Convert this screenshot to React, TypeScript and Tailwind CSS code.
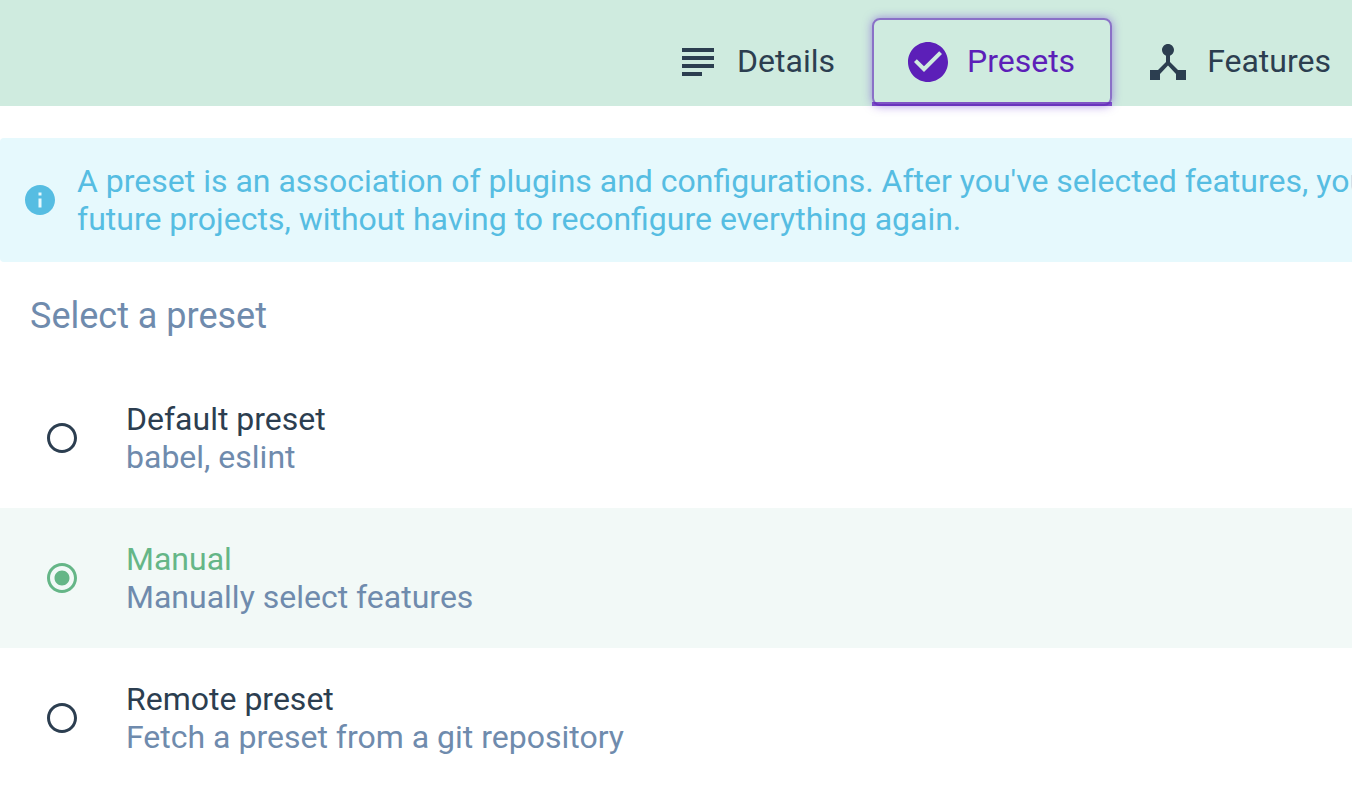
import { useState, type ReactNode } from "react";
import { MdSubject, MdCheckCircle, MdDeviceHub, MdInfo, MdRadioButtonChecked, MdRadioButtonUnchecked } from "react-icons/md";

const presets = [
  { id: "default", name: "Default preset", description: "babel, eslint" },
  { id: "manual", name: "Manual", description: "Manually select features" },
  { id: "remote", name: "Remote preset", description: "Fetch a preset from a git repository" },
];

function Tab({ icon, label, active = false }: { icon: ReactNode; label: string; active?: boolean }) {
  return (
    <button
      type="button"
      role="tab"
      aria-selected={active}
      className={
        active
          ? "relative flex h-22 items-center gap-[15px] border-b-4 border-[#7f52c6] pt-1 pr-[37px] pl-8 text-[#5c1fb8]"
          : "flex h-22 items-center gap-[15px] pr-[37px] pl-8 text-[#2c3e50]"
      }
    >
      {icon}
      <span className="pb-0.5">{label}</span>
      {active && (
        <span className="pointer-events-none absolute inset-x-0 top-0 -bottom-1 rounded-lg border-2 border-[#5c1fb8]/60 shadow-[0_0_10px_rgba(100,40,210,0.5)]" />
      )}
    </button>
  );
}

export default function App() {
  const [selected, setSelected] = useState("manual");

  return (
    <div className="min-h-screen overflow-x-hidden bg-white font-['Roboto',sans-serif] text-[32px] leading-[38px] text-[#2c3e50]">
      <header className="bg-[#cfebdf] pt-[18px]">
        <div role="tablist" className="-mr-4 flex justify-end">
          <Tab icon={<MdSubject size={48} />} label="Details" />
          <Tab icon={<MdCheckCircle size={48} />} label="Presets" active />
          <Tab icon={<MdDeviceHub size={48} />} label="Features" />
        </div>
      </header>

      <main className="pt-8">
        <div className="flex items-center gap-[19px] overflow-hidden rounded-l bg-[#e6f9fd] py-6 pl-[22px] text-[#56bde2]">
          <MdInfo size={36} className="shrink-0" />
          <p className="whitespace-nowrap">
            A preset is an association of plugins and configurations. After you've selected features, you
            <br />
            future projects, without having to reconfigure everything again.
          </p>
        </div>

        <fieldset>
          <legend className="px-[30px] pt-8 pb-[30px] text-[36px] leading-[44px] text-[#6f8bad]">Select a preset</legend>
          {presets.map((preset) => {
            const checked = preset.id === selected;
            return (
              <label
                key={preset.id}
                className={
                  checked
                    ? "relative flex h-[140px] cursor-pointer items-center gap-[46px] bg-[#f2f9f7] px-11"
                    : "relative flex h-[140px] cursor-pointer items-center gap-[46px] px-11"
                }
              >
                <input
                  type="radio"
                  name="preset"
                  checked={checked}
                  onChange={() => setSelected(preset.id)}
                  className="sr-only"
                />
                {checked ? (
                  <MdRadioButtonChecked size={36} className="shrink-0 text-[#65b687]" />
                ) : (
                  <MdRadioButtonUnchecked size={36} className="shrink-0" />
                )}
                <span className="flex flex-col">
                  <span className={checked ? "text-[#65b687]" : "text-[#2c3e50]"}>{preset.name}</span>
                  <span className="text-[#6f8bad]">{preset.description}</span>
                </span>
              </label>
            );
          })}
        </fieldset>
      </main>
    </div>
  );
}
